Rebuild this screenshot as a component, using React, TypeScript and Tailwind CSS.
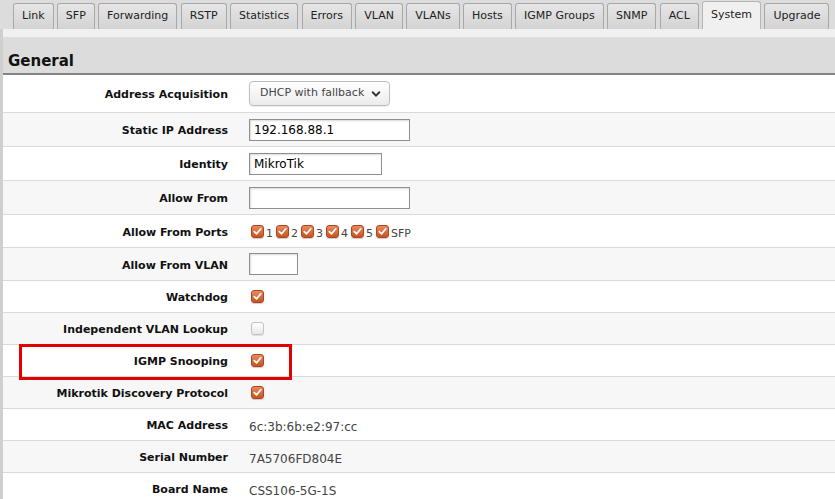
import React from "react";

const tabs = [
  "Link",
  "SFP",
  "Forwarding",
  "RSTP",
  "Statistics",
  "Errors",
  "VLAN",
  "VLANs",
  "Hosts",
  "IGMP Groups",
  "SNMP",
  "ACL",
  "System",
  "Upgrade",
];

function Check({ on = true }: { on?: boolean }) {
  if (!on) {
    return (
      <span className="inline-block w-[13px] h-[13px] rounded-[3px] border border-[#c2c2c2] bg-gradient-to-b from-white to-[#e8e8e8] shadow-[0_1px_1px_rgba(0,0,0,0.1)]" />
    );
  }
  return (
    <span className="inline-flex items-center justify-center w-[13px] h-[13px] rounded-[3px] border border-[#a9481f] bg-gradient-to-b from-[#e98a5f] to-[#c9541f] shadow-[0_1px_1px_rgba(0,0,0,0.2)]">
      <svg width="9" height="9" viewBox="0 0 9 9">
        <path d="M1.3 4.6 L3.6 6.8 L7.8 1.8" fill="none" stroke="#fff" strokeWidth="1.7" strokeLinecap="round" strokeLinejoin="round" />
      </svg>
    </span>
  );
}

function TextInput({ value, w }: { value: string; w: string }) {
  return (
    <div className={`${w} h-[22px] border border-[#8f8f8f] bg-white shadow-[inset_1px_1px_2px_rgba(0,0,0,0.15)] flex items-center px-[4px] text-[12px] text-black`}>
      {value}
    </div>
  );
}

type Row = { label: string; h: string; content: React.ReactNode };

const value = (t: string) => <span className="pt-[4px] text-[12px] text-[#444]">{t}</span>;

const rows: Row[] = [
  {
    label: "Address Acquisition",
    h: "h-[38px]",
    content: (
      <div className="w-[141px] h-[25px] rounded-[4px] border border-[#bdbdbd] bg-gradient-to-b from-white to-[#ececec] shadow-[0_1px_1px_rgba(0,0,0,0.08)] flex items-center pl-[10px] gap-[7px] text-[11px] text-[#444]">
        <span>DHCP with fallback</span>
        <svg width="10" height="8" viewBox="0 0 10 8">
          <path d="M1.2 1.8 L5 5.6 L8.8 1.8" fill="none" stroke="#333" strokeWidth="2" />
        </svg>
      </div>
    ),
  },
  { label: "Static IP Address", h: "h-[34px]", content: <TextInput value="192.168.88.1" w="w-[161px]" /> },
  { label: "Identity", h: "h-[34px]", content: <TextInput value="MikroTik" w="w-[133px]" /> },
  { label: "Allow From", h: "h-[34px]", content: <TextInput value="" w="w-[161px]" /> },
  {
    label: "Allow From Ports",
    h: "h-[33px]",
    content: (
      <div className="flex items-center pl-[2px]">
        {["1", "2", "3", "4", "5", "SFP"].map((p) => (
          <span key={p} className="flex items-center mr-[3px]">
            <Check />
            <span className="ml-[2px] mt-[5px] text-[11px] leading-none text-[#444]">{p}</span>
          </span>
        ))}
      </div>
    ),
  },
  { label: "Allow From VLAN", h: "h-[33px]", content: <TextInput value="" w="w-[49px]" /> },
  { label: "Watchdog", h: "h-[32px]", content: <span className="pl-[2px] flex"><Check /></span> },
  { label: "Independent VLAN Lookup", h: "h-[32px]", content: <span className="pl-[2px] flex"><Check on={false} /></span> },
  { label: "IGMP Snooping", h: "h-[32px]", content: <span className="pl-[2px] flex"><Check /></span> },
  { label: "Mikrotik Discovery Protocol", h: "h-[32px]", content: <span className="pl-[2px] flex"><Check /></span> },
  { label: "MAC Address", h: "h-[32px]", content: value("6c:3b:6b:e2:97:cc") },
  { label: "Serial Number", h: "h-[32px]", content: value("7A5706FD804E") },
  { label: "Board Name", h: "h-[32px]", content: value("CSS106-5G-1S") },
];

export default function App() {
  return (
    <div className="relative w-[835px] h-[499px] overflow-hidden bg-[#dcdcdc] font-['DejaVu_Sans',Verdana,sans-serif]">
      {/* tab strip */}
      <div className="flex items-end gap-[3.3px] pl-[13px] h-[29px]">
        {tabs.map((t) => {
          const active = t === "System";
          return (
            <div
              key={t}
              className={
                active
                  ? "h-[28px] px-[8px] flex items-center whitespace-nowrap border border-b-0 border-[#b5b5b5] rounded-t-[3px] bg-[#f0f0f0] text-[11px] text-[#222]"
                  : "h-[26px] px-[8px] flex items-center whitespace-nowrap border border-b-0 border-[#a8a8a8] rounded-t-[3px] bg-gradient-to-b from-[#e6e6e6] to-[#d3d3d3] text-[11px] text-[#222]"
              }
            >
              {t}
            </div>
          );
        })}
      </div>

      <div className="flex">
        <div className="w-[3px] bg-[#cfcfcf] h-[470px]" />
        <div className="flex-1 flex flex-col">
          <div className="h-[8px] bg-[#f0f0f0]" />
          <div className="h-[38px] border-b-2 border-[#858585] flex items-end pb-[4px] pl-[5px]">
            <span className="text-[15px] font-bold text-[#111] leading-none">General</span>
          </div>
          {rows.map((r, i) => (
            <div
              key={r.label}
              className={`${r.h} flex items-center border-b border-[#dadada] ${i % 2 === 1 ? "bg-[#f7f7f7]" : "bg-white"}`}
            >
              <div className="w-[225px] pt-[4px] text-right text-[11px] font-bold text-[#111]">{r.label}</div>
              <div className="ml-[21px] flex items-center">{r.content}</div>
            </div>
          ))}
        </div>
      </div>

      {/* highlight around the IGMP Snooping row */}
      <div className="absolute left-[19px] top-[344px] w-[273px] h-[36px] border-[3px] border-[#e30000] pointer-events-none" />
    </div>
  );
}
